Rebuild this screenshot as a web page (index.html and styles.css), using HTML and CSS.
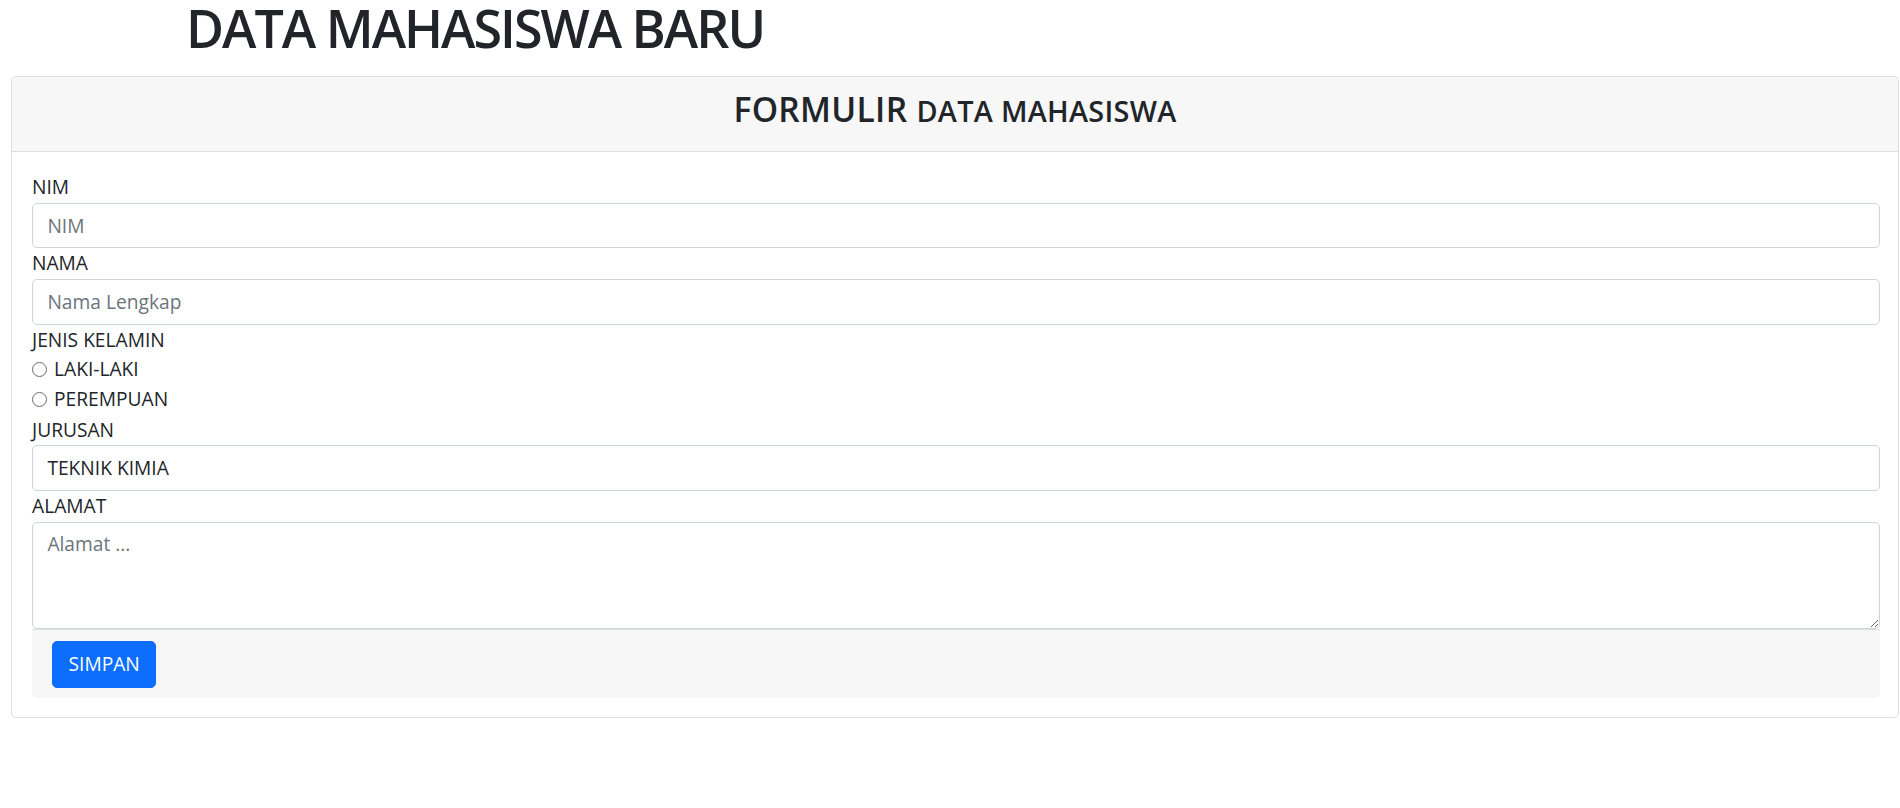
FILE: index.html
```html
<!DOCTYPE html>
<html lang="id">
<head>
<meta charset="utf-8">
<title>Data Mahasiswa Baru</title>
<link rel="stylesheet" href="styles.css">
</head>
<body>
<h1 class="page-title">DATA MAHASISWA BARU</h1>
<div class="card">
  <div class="card-header">
    <h3 class="card-title">FORMULIR <span class="card-sub">DATA MAHASISWA</span></h3>
  </div>
  <div class="card-body">
    <form class="form">
      <label class="field-label">NIM</label>
      <input class="form-control" type="text" placeholder="NIM">
      <label class="field-label">NAMA</label>
      <input class="form-control" type="text" placeholder="Nama Lengkap">
      <label class="field-label">JENIS KELAMIN</label>
      <div class="radio-row"><input class="radio" type="radio" name="jk"><span>LAKI-LAKI</span></div>
      <div class="radio-row"><input class="radio" type="radio" name="jk"><span>PEREMPUAN</span></div>
      <label class="field-label field-label-gap">JURUSAN</label>
      <select class="form-control select-plain">
        <option>TEKNIK KIMIA</option>
      </select>
      <label class="field-label">ALAMAT</label>
      <textarea class="form-control textarea" rows="3" placeholder="Alamat ..."></textarea>
      <div class="form-footer">
        <button class="btn-primary" type="button">SIMPAN</button>
      </div>
    </form>
  </div>
</div>
</body>
</html>
```

FILE: styles.css
```css
html, body {
  margin: 0;
  padding: 0;
  background: #ffffff;
}

body {
  font-family: "Open Sans", "Noto Sans", sans-serif;
  font-size: 19.2px;
  line-height: 28.8px;
  color: #212529;
}

.page-title {
  margin: 0 0 22px 0;
  padding-top: 2px;
  padding-left: 186px;
  font-size: 52px;
  line-height: 52px;
  font-weight: 600;
  letter-spacing: -2px;
  color: #212529;
}

.card {
  margin-left: 11px;
  width: 1888px;
  box-sizing: border-box;
  border: 1px solid #dfdfdf;
  border-radius: 5px;
  background: #ffffff;
}

.card-header {
  background: #f7f7f7;
  border-bottom: 1px solid #dfdfdf;
  border-radius: 5px 5px 0 0;
  padding: 12px 16px 20px;
  text-align: center;
}

.card-title {
  margin: 0;
  font-size: 33.6px;
  line-height: 40px;
  font-weight: 600;
  letter-spacing: 0.3px;
}

.card-sub {
  font-size: 28.8px;
}

.card-body {
  padding: 21px 18px 19px 20px;
}

.form {
  display: flex;
  flex-direction: column;
}

.field-label {
  display: block;
  height: 28.8px;
  line-height: 28.8px;
}

.field-label-gap {
  margin-top: 1px;
}

.form-control {
  display: block;
  box-sizing: border-box;
  width: 100%;
  height: 45.6px;
  margin: 1px 0;
  padding: 7.2px 14.4px;
  font-family: inherit;
  font-size: 19.2px;
  line-height: 28.8px;
  color: #212529;
  background: #ffffff;
  border: 1px solid #ced4da;
  border-radius: 5px;
  outline: none;
}

.form-control::placeholder {
  color: #6c757d;
  opacity: 1;
}

.select-plain {
  appearance: none;
  -webkit-appearance: none;
}

.textarea {
  height: 107px;
  margin-bottom: 0;
  resize: vertical;
}

.radio-row {
  display: flex;
  align-items: center;
  height: 30px;
}

.radio {
  appearance: none;
  -webkit-appearance: none;
  box-sizing: border-box;
  width: 15px;
  height: 15px;
  margin: 0 7px 0 0;
  border: 1px solid #6b6b6b;
  border-radius: 50%;
  background: #ffffff;
}

.form-footer {
  background: #f7f7f7;
  border-top: 1px solid #dfdfdf;
  border-radius: 0 0 5px 5px;
  padding: 11px 20px 10px;
}

.btn-primary {
  display: inline-block;
  height: 47px;
  padding: 0 15.5px;
  font-family: inherit;
  font-size: 19.2px;
  line-height: 28.8px;
  color: #ffffff;
  background: #0d6efd;
  border: 1px solid #0d6efd;
  border-radius: 5px;
}
```
